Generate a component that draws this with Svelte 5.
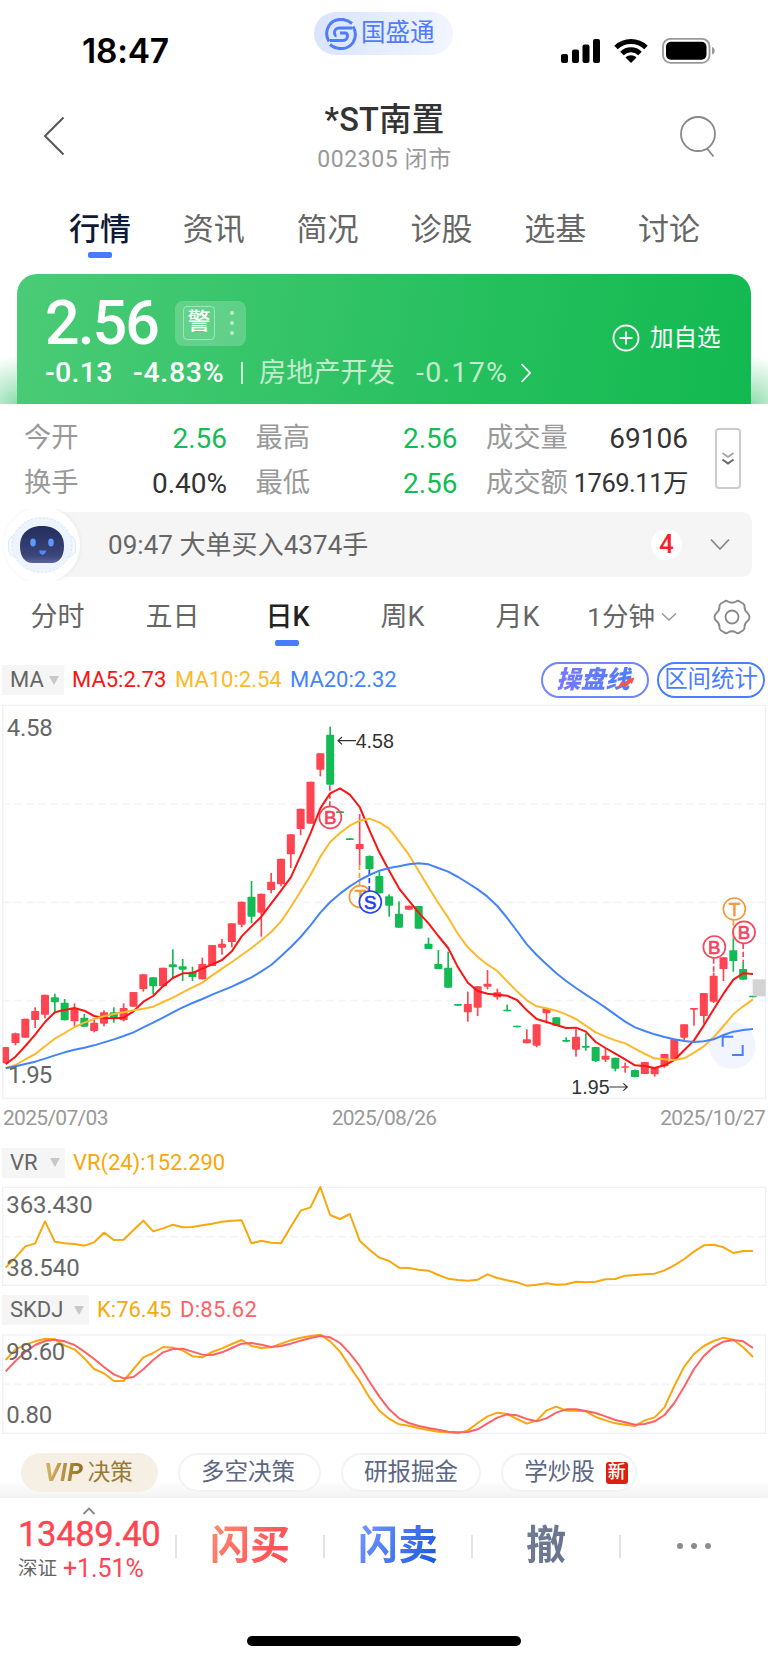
<script lang="ts">
  const tabs = ['行情', '资讯', '简况', '诊股', '选基', '讨论'];
  const periods = ['分时', '五日', '日K', '周K', '月K'];
  let activeTab = '行情';
  let activePeriod = '日K';

  const quotes = [
    { label: '今开', value: '2.56', down: true },
    { label: '最高', value: '2.56', down: true },
    { label: '成交量', value: '69106' },
    { label: '换手', value: '0.40%' },
    { label: '最低', value: '2.56', down: true },
    { label: '成交额', value: '1769.11万', small: true }
  ];

  // body top, body bottom, high, low, colour
  type Candle = [number, number, number, number, 'r' | 'g'];
  const candles: Candle[] = [
    [1041, 1090, 1041, 1090, 'r'], [1000, 1029, 998, 1036, 'r'], [956, 1013, 956, 1013, 'r'],
    [933, 960, 922, 984, 'r'], [884, 944, 884, 955, 'r'], [892, 907, 881, 940, 'g'],
    [908, 961, 897, 961, 'g'], [925, 964, 910, 980, 'r'], [953, 980, 942, 980, 'g'],
    [968, 993, 960, 997, 'r'], [937, 971, 931, 979, 'r'], [937, 957, 922, 968, 'g'],
    [924, 961, 910, 964, 'r'], [876, 920, 876, 920, 'r'], [823, 867, 823, 875, 'r'],
    [832, 859, 832, 883, 'g'], [803, 859, 803, 859, 'r'], [793, 802, 748, 834, 'g'],
    [799, 809, 777, 843, 'g'], [815, 831, 800, 843, 'g'], [792, 838, 773, 838, 'r'],
    [735, 798, 735, 798, 'r'], [731, 743, 717, 764, 'r'], [670, 726, 670, 742, 'r'],
    [605, 674, 605, 682, 'r'], [590, 650, 543, 670, 'g'], [581, 638, 581, 710, 'r'],
    [545, 570, 519, 580, 'r'], [476, 553, 476, 559, 'r'], [403, 463, 403, 504, 'r'],
    [326, 387, 326, 406, 'r'], [245, 371, 245, 371, 'r'], [160, 209, 160, 229, 'r'],
    [104, 254, 80, 254, 'g'], [334, 339, 334, 339, 'g'], [415, 420, 415, 420, 'g'],
    [432, 447, 342, 495, 'r'], [468, 508, 466, 510, 'g'], [528, 580, 515, 580, 'g'],
    [589, 617, 583, 650, 'g'], [641, 683, 604, 683, 'g'], [617, 629, 617, 629, 'r'],
    [618, 686, 618, 686, 'g'], [731, 747, 713, 747, 'g'], [792, 807, 750, 807, 'g'],
    [803, 863, 755, 863, 'g'], [912, 917, 912, 917, 'g'], [912, 937, 875, 965, 'r'],
    [859, 923, 859, 948, 'r'], [851, 860, 810, 868, 'r'], [877, 892, 866, 899, 'r'],
    [929, 934, 914, 934, 'g'], [977, 982, 977, 982, 'g'], [1018, 1030, 988, 1030, 'r'],
    [973, 1037, 973, 1042, 'r'], [924, 940, 924, 970, 'r'], [952, 977, 952, 977, 'g'],
    [1020, 1025, 1012, 1025, 'g'], [1010, 1049, 985, 1070, 'r'], [1038, 1043, 1000, 1052, 'g'],
    [1041, 1083, 1041, 1086, 'g'], [1067, 1079, 1046, 1086, 'r'], [1073, 1106, 1073, 1114, 'g'],
    [1099, 1103, 1088, 1118, 'r'], [1110, 1131, 1108, 1132, 'g'], [1086, 1122, 1086, 1122, 'r'],
    [1103, 1123, 1103, 1130, 'r'], [1062, 1099, 1062, 1103, 'r'], [1017, 1077, 1017, 1077, 'r'],
    [973, 1013, 973, 1024, 'r'], [924, 929, 924, 977, 'r'], [879, 948, 879, 971, 'r'],
    [827, 905, 818, 909, 'r'], [772, 807, 772, 843, 'r'], [751, 783, 715, 815, 'g'],
    [807, 839, 785, 839, 'g'], [887, 892, 887, 892, 'g']
  ];

  const ma5 = [
    1093, 1070, 1038, 1004, 966, 937, 930, 924, 932, 948, 954, 955, 953, 934, 905, 888, 859, 834, 820, 819,
    806, 793, 780, 754, 709, 679, 650, 611, 572, 532, 467, 400, 325, 280, 265, 284, 321, 391, 457, 512,
    565, 602, 638, 670, 708, 744, 802, 848, 873, 881, 884, 887, 900, 931, 957, 966, 975, 984, 983, 995,
    1026, 1044, 1061, 1078, 1096, 1098, 1104, 1096, 1080, 1051, 1021, 976, 928, 881, 839, 820, 822
  ];
  const ma10 = [
    1104, 1095, 1078, 1062, 1039, 1016, 999, 981, 968, 957, 949, 942, 937, 931, 926, 920, 906, 893, 877, 862,
    848, 826, 806, 786, 765, 744, 721, 696, 664, 621, 574, 525, 470, 426, 399, 377, 362, 356, 367, 386,
    424, 464, 513, 562, 609, 653, 702, 742, 770, 794, 813, 844, 874, 901, 919, 925, 932, 943, 957, 977,
    997, 1010, 1021, 1030, 1046, 1062, 1075, 1078, 1080, 1075, 1058, 1039, 1012, 978, 943, 919, 898
  ];
  const ma20 = [
    1105, 1099, 1092, 1085, 1076, 1066, 1057, 1049, 1043, 1036, 1027, 1018, 1008, 997, 982, 968, 953, 937, 922, 909,
    897, 884, 872, 860, 846, 832, 814, 795, 769, 741, 711, 676, 638, 606, 581, 559, 540, 525, 512, 504,
    499, 493, 490, 493, 504, 515, 531, 549, 568, 590, 618, 654, 693, 733, 765, 793, 820, 843, 864, 884,
    903, 923, 944, 965, 982, 993, 1003, 1011, 1018, 1023, 1026, 1024, 1018, 1005, 995, 990, 987
  ];
  const vr = [
    518, 488, 454, 445, 379, 440, 445, 447, 452, 442, 413, 435, 434, 405, 377, 409, 400, 389, 397, 396,
    391, 386, 380, 377, 376, 445, 437, 443, 445, 395, 347, 337, 276, 360, 372, 357, 437, 464, 488, 498,
    518, 519, 524, 527, 540, 551, 555, 557, 554, 538, 549, 556, 562, 572, 569, 565, 569, 568, 560, 562,
    560, 553, 552, 542, 540, 538, 536, 526, 511, 492, 470, 451, 449, 457, 474, 468, 468
  ];
  const skdjK = [
    795, 763, 749, 739, 731, 733, 752, 763, 790, 822, 835, 858, 858, 822, 787, 774, 756, 758, 766, 784,
    787, 771, 760, 747, 735, 753, 759, 757, 746, 736, 728, 723, 719, 739, 770, 815, 858, 908, 947, 971,
    988, 992, 1000, 1005, 1010, 1012, 1015, 1006, 984, 964, 953, 957, 972, 986, 977, 946, 935, 947, 947, 949,
    966, 976, 985, 989, 993, 976, 967, 937, 873, 815, 777, 753, 738, 728, 734, 757, 786
  ];
  const skdjD = [
    829, 798, 771, 750, 738, 734, 739, 750, 770, 792, 816, 838, 850, 846, 823, 795, 772, 762, 761, 770,
    779, 780, 772, 759, 746, 744, 749, 756, 753, 746, 737, 729, 723, 727, 744, 775, 813, 860, 905, 943,
    970, 984, 993, 999, 1004, 1010, 1012, 1011, 1003, 985, 968, 958, 961, 972, 979, 970, 953, 943, 943, 948,
    954, 964, 975, 982, 989, 987, 979, 960, 924, 875, 822, 783, 756, 740, 735, 739, 759
  ];

  const marks = [
    { t: 'B', x: 991, y: 352, sx: 989.5, y1: 256, y2: 319, color: '#f5455a', fill: 'none' },
    { t: 'T', x: 1081, y: 590, sx: 1078.5, y1: 494, y2: 557, color: '#f29b38', fill: 'none' },
    { t: 'S', x: 1111, y: 606, sx: 1108, y1: 510, y2: 573, color: '#2440f5', fill: '#fff' },
    { t: 'B', x: 2143, y: 741, sx: 2141, y1: 775, y2: 824, color: '#f5455a', fill: 'none' },
    { t: 'T', x: 2203, y: 627, sx: 2200, y1: 661, y2: 715, color: '#f29b38', fill: 'none' },
    { t: 'B', x: 2232, y: 697, sx: 2229.5, y1: 731, y2: 785, color: '#f5455a', fill: 'none' }
  ];

  const cx = (i: number) => 17 + i * 29.5;
  const line = (ys: number[]) => ys.map((y, i) => `${cx(i)},${y}`).join(' ');
</script>

<main>
  <header class="status">
    <span class="time">18:47</span>
    <div class="brand">
      <svg width="32" height="32" viewBox="0 0 32 32" fill="none" stroke="#4d7cff">
        <path d="M27 5.500C20-.5 9 0 4 7.500 1 12.500 1 18.500 4 23.500" stroke-width="3" />
        <path d="M5 26.500C12 32.500 23 32 28 24.500c3-5 3-11 0-16" stroke-width="3" />
        <path d="M27 10H14a4.500 4.500 0 0 0-4.500 4.500c0 2 1 3.500 2 3.500" stroke-width="3" />
        <path d="M5 22.500h13a4.500 4.500 0 0 0 4.500-4.500c0-2-1-3-2.500-3h-5" stroke-width="3" />
      </svg>
      <span>国盛通</span>
    </div>
    <div class="signals">
      <svg width="160" height="30" viewBox="0 0 160 30">
        <rect x="1" y="18" width="7" height="9" rx="2" />
        <rect x="12" y="13.500" width="7" height="13.500" rx="2" />
        <rect x="22.500" y="8.500" width="7" height="18.500" rx="2" />
        <rect x="33" y="3" width="7" height="24" rx="2" />
        <g fill="none" stroke="#000" stroke-width="5">
          <path d="M56 11.500c8.500-8 21.500-8 30 0" />
          <path d="M62 17.500c5-5 13-5 18 0" />
        </g>
        <path d="M65.500 21.500c3-3 8-3 11 0L71 27z" />
        <rect x="103" y="2.800" width="46.500" height="24" rx="7.500" fill="none" stroke="#999" stroke-width="1.800" />
        <rect x="106" y="5.800" width="40.500" height="18" rx="5" />
        <path d="M152 11c3.600 1.200 3.600 6.400 0 7.600z" fill="#999" />
      </svg>
    </div>
  </header>

  <nav class="title-bar">
    <svg width="24" height="40" viewBox="0 0 24 40" fill="none" stroke="#555" stroke-width="2">
      <path d="M20.500 1.500 2 20l18.500 18.500" />
    </svg>
    <div class="title">
      <h1>*ST南置</h1>
      <p>002305 闭市</p>
    </div>
    <svg width="40" height="44" viewBox="0 0 40 44" fill="none" stroke="#888" stroke-width="1.800">
      <circle cx="20" cy="19" r="17" />
      <path d="m29 33.500 6.500 8" />
    </svg>
  </nav>

  <div class="tabs">
    {#each tabs as tab}
      <button class:active={tab === activeTab} on:click={() => (activeTab = tab)}>{tab}</button>
    {/each}
  </div>

  <div class="card-wrap">
    <section class="card">
      <div class="price-row">
        <strong class="price">2.56</strong>
        <div class="warn"><span>警</span><i></i></div>
      </div>
      <div class="change-row">
        <span class="chg">-0.13</span>
        <span class="pct">-4.83%</span>
        <span class="bar"></span>
        <span class="sector">房地产开发</span>
        <span class="sector-pct">-0.17%</span>
        <svg width="12" height="22" viewBox="0 0 12 22" fill="none" stroke="#fff" stroke-width="1.800">
          <path d="m1.500 2 8.500 9-8.500 9" />
        </svg>
      </div>
      <button class="add">
        <svg width="28" height="28" viewBox="0 0 28 28" fill="none" stroke="#fff" stroke-width="1.800">
          <circle cx="14" cy="14" r="12.500" />
          <path d="M14 7.500v13M7.500 14h13" />
        </svg>
        <span>加自选</span>
      </button>
    </section>
  </div>

  <section class="stats">
    <div class="quotes">
      {#each quotes as q}
        <div class="quote">
          <span>{q.label}</span>
          <b class:down={q.down} class:small={q.small}>{q.value}</b>
        </div>
      {/each}
    </div>
    <button class="expand" aria-label="more">
      <svg width="14" height="14" viewBox="0 0 14 14" fill="none" stroke-width="2">
        <path d="m1.500 1 5.500 4 5.500-4" stroke="#aaa" />
        <path d="m1.500 7.500 5.500 4 5.500-4" stroke="#666" />
      </svg>
    </button>
  </section>

  <section class="notice">
    <svg class="robot" width="86" height="72" viewBox="0 0 86 72">
      <defs>
        <radialGradient id="halo">
          <stop offset="0.85" stop-color="#dedee2" stop-opacity="0.6" />
          <stop offset="1" stop-color="#f5f5f5" stop-opacity="0" />
        </radialGradient>
        <linearGradient id="face" x1="0" y1="0" x2="0" y2="1">
          <stop offset="0" stop-color="#232d5c" />
          <stop offset="0.8" stop-color="#3b4578" />
          <stop offset="1" stop-color="#5a64a0" />
        </linearGradient>
      </defs>
      <rect width="36" height="72" fill="#fff" />
      <circle cx="43" cy="36" r="42" fill="url(#halo)" />
      <circle cx="42" cy="36" r="38" fill="#fff" />
      <rect x="8.500" y="26" width="67" height="22" rx="8" fill="#f6f9ff" stroke="#dce8fc" />
      <ellipse cx="42" cy="36" rx="30" ry="27.500" fill="#edf4ff" stroke="#d5e5fd" stroke-dasharray="2 2" />
      <path d="M20 37c0-13 9-20 22-20s22 7 22 20c0 12-6 17-12 17H32c-6 0-12-5-12-17z" fill="url(#face)" />
      <ellipse cx="33" cy="33.500" rx="2.800" ry="4" fill="#5b9bff" />
      <ellipse cx="51" cy="33.500" rx="2.800" ry="4" fill="#5b9bff" />
      <path d="M39 41.500h7.500l-1.500 3-2.500 1.500-2.500-1.500z" fill="#4b8bf5" />
    </svg>
    <p>09:47 大单买入4374手</p>
    <span class="count">4</span>
    <svg width="20" height="13" viewBox="0 0 20 13" fill="none" stroke="#888" stroke-width="1.800">
      <path d="m1 1.500 9 9.500 9-9.500" />
    </svg>
  </section>

  <div class="periods">
    {#each periods as p}
      <button class:active={p === activePeriod} on:click={() => (activePeriod = p)}>{p}</button>
    {/each}
    <button class="minute">
      1分钟
      <svg width="16" height="10" viewBox="0 0 16 10" fill="none" stroke="#999" stroke-width="1.500">
        <path d="m1 1.500 7 6.500 7-6.500" />
      </svg>
    </button>
    <svg class="gear" width="38" height="38" viewBox="0 0 38 38" fill="none" stroke="#8a8a8a" stroke-width="1.900">
      <path d="M11.500 3.500Q13 2 15 3.500q4 2.500 8 0Q25 2 26.500 3.500l3.500 2q2 1.500 1.500 3.500 0 3.500 3 6 2 1.500 2 4t-2 4q-3 2.500-3 6 .5 2-1.500 3.500l-3.500 2Q25 36 23 34.500q-4-2.500-8 0Q13 36 11.500 34.500l-3.500-2q-2-1.500-1.500-3.500 0-3.500-3-6-2-1.500-2-4t2-4q3-2.500 3-6Q6 7 8 5.500z" />
      <circle cx="19" cy="19" r="6.500" />
    </svg>
  </div>

  <div class="indicator ma">
    <span class="chip">MA<i></i></span>
    <span class="m5">MA5:2.73</span>
    <span class="m10">MA10:2.54</span>
    <span class="m20">MA20:2.32</span>
    <button class="outline trade">
      <em>操盘线</em>
      <svg width="18" height="12" viewBox="0 0 18 12" fill="#ff5340">
        <path d="M0 11.500 4.500 4.500 8 6l3-3-2-.5L17.500.5 15 7l-1.500-1.500-4.500 4.500-3-1.500z" />
      </svg>
    </button>
    <button class="outline">区间统计</button>
  </div>

  <svg class="chart" width="768" height="400" viewBox="0 0 2304 1200">
    <rect class="frame" x="8" y="16" width="2289" height="1179" />
    {#each [312, 607, 902] as y}
      <line class="grid" x1="8" x2="2297" y1={y} y2={y} />
    {/each}
    <text class="scale" x="20" y="109" textLength="138">4.58</text>
    {#each candles as [top, bottom, high, low, c], i}
      <g class={c}>
        <rect x={cx(i) - 2.5} y={high} width="5" height={low - high} />
        <rect x={i ? cx(i) - 12 : 8} y={top} width={i ? 24 : 19} height={bottom - top} rx="2.5" />
      </g>
    {/each}
    {#each marks as m}
      <line x1={m.sx} x2={m.sx} y1={m.y1} y2={m.y2} stroke={m.color} stroke-width="5" stroke-dasharray="16 8" />
      <circle cx={m.x} cy={m.y} r="33" fill={m.fill} stroke={m.color} stroke-width="5" />
      <text class="mark" x={m.x} y={m.y + 20} fill={m.color} stroke={m.color}>{m.t}</text>
    {/each}
    <circle cx="2197" cy="1037" r="70" fill="#f1f5fe" />
    <polyline class="ma-line" points={line(ma5)} stroke="#fa1414" />
    <polyline class="ma-line" points={line(ma10)} stroke="#fdb92c" />
    <polyline class="ma-line" points={line(ma20)} stroke="#4484fb" />
    <path d="M2168 1040v-30h32M2228 1035v30h-32" fill="none" stroke="#4a7dff" stroke-width="6" />
    <rect x="2258" y="838" width="39" height="51" fill="#d3d3d3" />
    <text class="scale" x="24" y="1148" textLength="133">1.95</text>
    <path class="arrow" d="M1068 122h-54m12-11-12 11 12 11" />
    <text class="peak" x="1067" y="143">4.58</text>
    <text class="peak" x="1714" y="1182">1.95</text>
    <path class="arrow" d="M1828 1161h54m-12-11 12 11-12 11" />
  </svg>
  <div class="dates">
    <span>2025/07/03</span>
    <span>2025/08/26</span>
    <span>2025/10/27</span>
  </div>

  <div class="indicator">
    <span class="chip vr-chip">VR<i></i></span>
    <span class="vr-value">VR(24):152.290</span>
  </div>
  <svg class="chart" width="768" height="102" viewBox="0 270 2304 306">
    <rect class="frame" x="8" y="277" width="2289" height="294" />
    <line class="grid" x1="8" x2="2297" y1="425" y2="425" />
    <polyline class="ma-line" points={line(vr)} stroke="#f8a70c" />
    <text class="scale" x="19" y="353" textLength="259">363.430</text>
    <text class="scale" x="19" y="542" textLength="220">38.540</text>
  </svg>

  <div class="indicator skdj">
    <span class="chip skdj-chip">SKDJ<i></i></span>
    <span class="k-value">K:76.45</span>
    <span class="d-value">D:85.62</span>
  </div>
  <svg class="chart" width="768" height="102" viewBox="0 714 2304 306">
    <rect class="frame" x="8" y="720" width="2289" height="295" />
    <line class="grid" x1="8" x2="2297" y1="868" y2="868" />
    <polyline class="ma-line" points={line(skdjK)} stroke="#f8a70c" />
    <polyline class="ma-line" points={line(skdjD)} stroke="#ff6166" />
    <text class="scale" x="19" y="796" textLength="177">98.60</text>
    <text class="scale" x="19" y="984" textLength="138">0.80</text>
  </svg>

  <div class="pills">
    <button class="vip"><em>VIP</em>决策</button>
    <button class="wide">多空决策</button>
    <button>研报掘金</button>
    <button class="learn">学炒股<sup>新</sup></button>
  </div>

  <footer>
    <div class="trade-bar">
      <div class="index">
        <svg width="14" height="8" viewBox="0 0 14 8" fill="none" stroke="#888" stroke-width="1.800">
          <path d="m1.500 7 5.500-5.500L12.500 7" />
        </svg>
        <strong>13489.40</strong>
        <p>深证 <b>+1.51%</b></p>
      </div>
      <button class="buy"><span>闪买</span></button>
      <button class="sell"><span>闪卖</span></button>
      <button class="cancel"><span>撤</span></button>
      <button class="more" aria-label="menu"><i></i><i></i><i></i></button>
    </div>
    <div class="home"></div>
  </footer>
</main>

<style>
  :global(body) {
    margin: 0;
    background: #fff;
  }

  main {
    width: 768px;
    height: 1663px;
    overflow: hidden;
    background: #fff;
    color: #666;
    font-family: Roboto, 'Noto Sans CJK SC', sans-serif;
  }

  main * {
    box-sizing: border-box;
  }

  button {
    padding: 0;
    border: none;
    background: none;
    color: inherit;
    font: inherit;
    white-space: nowrap;
  }

  h1,
  p {
    margin: 0;
  }

  svg {
    display: block;
    flex: none;
  }

  .status {
    display: grid;
    grid-template-columns: 314px 139px 1fr;
    height: 88px;
    padding-top: 12px;
  }

  .time {
    padding: 19px 0 0 82px;
    color: #000;
    font: 600 33.5px/40px Inter, sans-serif;
    letter-spacing: -0.2px;
  }

  .brand {
    display: flex;
    align-items: center;
    gap: 4px;
    height: 43px;
    padding-left: 11px;
    border-radius: 22px;
    background: linear-gradient(100deg, #d9e3fd, #f3f6ff);
    color: #4d7cff;
    font-size: 24.5px;
    line-height: 40px;
  }

  .brand span {
    padding-bottom: 1px;
  }

  .signals {
    padding: 24px 0 0 107px;
  }

  .title-bar {
    display: grid;
    grid-template-columns: 24px 1fr 40px;
    align-items: start;
    height: 108px;
    padding: 10px 50px 0 43px;
  }

  .title-bar > svg:first-child {
    margin-top: 18px;
  }

  .title-bar > svg:last-child {
    margin-top: 17px;
  }

  .title {
    padding-left: 24px;
    text-align: center;
  }

  h1 {
    color: #333;
    font-size: 32.5px;
    font-weight: 500;
    line-height: 44px;
    letter-spacing: 0.2px;
  }

  .title p {
    color: #999;
    font-size: 23px;
    line-height: 35px;
    letter-spacing: 0.6px;
  }

  .tabs {
    display: flex;
    height: 78px;
    padding: 11px 42px 0 43px;
  }

  .tabs button {
    flex: 1;
    display: flex;
    flex-direction: column;
    align-items: center;
    color: #666;
    font-size: 31px;
    line-height: 45px;
  }

  .tabs .active {
    color: #0f1935;
    font-weight: 500;
  }

  .active::after {
    content: '';
    width: 24px;
    height: 6px;
    border-radius: 2px;
    background: #4a7bff;
  }

  .card-wrap {
    height: 130px;
    padding: 0 17px;
    background: radial-gradient(circle at 17px 130px, rgba(30, 188, 92, 0.5), transparent 48px),
      radial-gradient(circle at 751px 130px, rgba(30, 188, 92, 0.5), transparent 48px);
  }

  .card {
    display: grid;
    grid-template: 72px 1fr / 566px 1fr;
    height: 130px;
    padding-left: 28px;
    border-radius: 20px 20px 0 0;
    background: linear-gradient(100deg, #4bcb77, #24bf5d 65%, #12b950);
    color: #fff;
  }

  .price-row {
    display: flex;
    align-items: center;
    height: 72px;
    padding-top: 26px;
  }

  .price {
    width: 130px;
    padding-bottom: 1px;
    font-size: 61px;
    font-weight: 500;
    line-height: 60px;
    letter-spacing: -2px;
  }

  .warn {
    display: flex;
    align-items: center;
    width: 71px;
    height: 45px;
    padding-left: 8px;
    border-radius: 8px;
    background: rgba(255, 255, 255, 0.2);
  }

  .warn span {
    width: 32px;
    height: 34px;
    border: 1px solid rgba(255, 255, 255, 0.4);
    border-radius: 4px;
    font-size: 23px;
    font-weight: 500;
    line-height: 30px;
    text-align: center;
  }

  .warn i {
    width: 4px;
    height: 4px;
    margin-left: 15px;
    border-radius: 50%;
    background: #c0eccd;
    box-shadow: 0 -10px #c0eccd, 0 10px #c0eccd;
  }

  .change-row {
    display: flex;
    align-items: center;
    padding-top: 2px;
    font-size: 28.5px;
    line-height: 40px;
    white-space: nowrap;
    height: 52px;
  }

  .chg {
    width: 88px;
    font-weight: 500;
    letter-spacing: 0.3px;
  }

  .pct {
    width: 108px;
    font-weight: 500;
    letter-spacing: 0.7px;
  }

  .bar {
    width: 2px;
    height: 22px;
    margin-right: 16px;
    background: #d0f0da;
  }

  .sector {
    width: 157px;
    color: #c0eccd;
    font-size: 27.2px;
  }

  .sector-pct {
    width: 104px;
    color: #c0eccd;
    letter-spacing: 1.3px;
  }

  .add {
    display: flex;
    grid-area: 1 / 2 / 3 / 3;
    align-items: center;
    gap: 10px;
    height: 130px;
    font-size: 23.5px;
    padding: 0 0 3px 1px;
  }

  .add span {
    padding-bottom: 3px;
  }

  .stats {
    display: flex;
    height: 108px;
    padding: 12px 0 0 24px;
  }

  .quotes {
    display: grid;
    grid-template: 45px 45px / 203px 202px 202px;
    column-gap: 28.5px;
    width: 664px;
  }

  .quote {
    display: flex;
    align-items: center;
    justify-content: space-between;
    color: #999;
    font-size: 27.3px;
    line-height: 45px;
    white-space: nowrap;
  }

  .quote b {
    color: #333;
    font-size: 28px;
    font-weight: 400;
  }

  .quote .down {
    color: #15bb55;
  }

  .quote .small {
    font-size: 25.5px;
    letter-spacing: -0.5px;
  }

  .expand {
    display: flex;
    align-items: center;
    justify-content: center;
    width: 26px;
    height: 61px;
    margin: 12px 0 0 27px;
    border: 2px solid #ccc;
    border-radius: 4px;
  }

  .notice {
    display: flex;
    align-items: center;
    width: 752px;
    height: 65px;
    border-radius: 0 10px 10px 0;
    background: #f5f5f5;
  }

  .robot {
    margin: -4px 0;
  }

  .notice p {
    flex: 1;
    padding: 0 0 5px 22px;
    font-size: 26px;
    letter-spacing: 0.05px;
  }

  .count {
    width: 31px;
    height: 31px;
    margin-right: 28px;
    border-radius: 50%;
    background: #fff;
    color: #fa1e2c;
    font-size: 26px;
    font-weight: 500;
    line-height: 31px;
    text-align: center;
  }

  .notice > svg:last-child {
    margin-right: 22px;
  }

  .periods {
    display: flex;
    align-items: flex-start;
    height: 78px;
    padding-top: 20px;
    font-size: 27px;
    line-height: 40px;
  }

  .periods button {
    display: flex;
    flex-direction: column;
    align-items: center;
    width: 115px;
  }

  .periods .active {
    color: #222;
    font-weight: 500;
  }

  .periods .active::after {
    margin: 3px 2px 0 0;
  }

  .periods .minute {
    flex-direction: row;
    gap: 6px;
    width: 124px;
    margin-left: 12px;
    font-size: 26.5px;
  }

  .gear {
    margin: 1px 0 0 2px;
  }

  .indicator {
    display: flex;
    align-items: center;
    height: 45px;
    padding-left: 2px;
    font-size: 22px;
    line-height: 30px;
  }

  .ma {
    padding-top: 5px;
  }

  .chip {
    display: flex;
    align-items: center;
    justify-content: space-between;
    width: 62px;
    height: 30px;
    margin-right: 8px;
    padding: 0 5px 0 8px;
    background: #f5f5f5;
  }

  .chip i {
    border: 5.5px solid transparent;
    border-top: 9px solid #c8c8c8;
    border-bottom: 0;
  }

  .m5 {
    width: 103px;
    color: #fa1414;
  }

  .m10 {
    width: 115px;
    color: #fdb92c;
  }

  .m20 {
    width: 251px;
    color: #4484fb;
  }

  .outline {
    display: flex;
    align-items: center;
    justify-content: center;
    width: 108px;
    height: 36px;
    border: 2px solid #4a7dff;
    border-radius: 18px;
    color: #4a7dff;
    font-size: 23.4px;
    line-height: 30px;
    padding-bottom: 2px;
  }

  .trade {
    position: relative;
    margin-right: 8px;
    border-color: #6f86ff;
  }

  .trade em {
    background: linear-gradient(90deg, #7a78ff, #4a7dff);
    background-clip: text;
    color: transparent;
    font-size: 24.5px;
    font-weight: 900;
    line-height: 32px;
    padding: 2px 6px 0 2px;
  }

  .trade svg {
    position: absolute;
    right: 12px;
    bottom: 7px;
  }

  .chart {
    width: 768px;
  }

  .frame {
    fill: none;
    stroke: #eff1f8;
    stroke-width: 4;
  }

  .grid {
    stroke: #f3f4f9;
    stroke-width: 5;
    stroke-dasharray: 22 14;
  }

  .scale {
    fill: #666;
    font-size: 72px;
  }

  .r {
    fill: #ff4551;
  }

  .g {
    fill: #14ba54;
  }

  .mark {
    font: 56px 'Liberation Sans', sans-serif;
    stroke-width: 2;
    text-anchor: middle;
  }

  .ma-line {
    fill: none;
    stroke-width: 6;
    stroke-linejoin: round;
  }

  .arrow {
    fill: none;
    stroke: #333;
    stroke-width: 3.5;
  }

  .peak {
    fill: #333;
    font: 59px 'Liberation Sans', sans-serif;
  }

  .dates {
    display: flex;
    justify-content: space-between;
    height: 40px;
    padding: 2px 3px 0;
    color: #999;
    font-size: 21px;
    line-height: 32px;
    letter-spacing: -0.7px;
  }

  .vr-chip {
    width: 63px;
    margin-right: 8px;
  }

  .vr-value,
  .k-value {
    color: #f8a70c;
  }

  .vr-value {
    letter-spacing: -0.05px;
  }

  .skdj {
    height: 46px;
  }

  .skdj-chip {
    width: 87px;
    margin-right: 8px;
  }

  .k-value {
    width: 83px;
  }

  .d-value {
    color: #ff6166;
    letter-spacing: 0.3px;
  }

  .pills {
    display: flex;
    height: 63px;
    padding: 18px 0 0 21px;
    background: linear-gradient(#fff 45px, #f3f3f3);
  }

  .pills button {
    display: flex;
    align-items: center;
    justify-content: center;
    width: 140px;
    height: 39px;
    margin-right: 20px;
    border: 2px solid #f3f3f5;
    border-radius: 20px;
    background: #fff;
    color: #5c6784;
    font-size: 23.500px;
    line-height: 35px;
  }

  .pills .wide {
    width: 143px;
    padding-right: 3px;
  }

  .pills .vip {
    width: 137px;
    border: none;
    background: #f5f0e3;
    color: #997a32;
    font-size: 22.5px;
    padding-right: 2px;
  }

  .vip em {
    margin-right: 3px;
    padding-right: 2px;
    background: linear-gradient(90deg, #dcb56a, #8f6a1c);
    background-clip: text;
    color: transparent;
    font-size: 25px;
    font-weight: 700;
  }

  .pills .learn {
    width: 136px;
    gap: 11px;
    padding-left: 14px;
  }

  sup {
    width: 22px;
    height: 22px;
    border-radius: 3px;
    background: #df1f0d;
    color: #fff;
    font-size: 18px;
    font-weight: 500;
    line-height: 20px;
    text-align: center;
  }

  footer {
    display: flex;
    flex-direction: column;
    align-items: center;
    justify-content: space-between;
    height: 165px;
    padding-bottom: 17px;
    background: #fff;
  }

  .trade-bar {
    display: grid;
    grid-template-columns: 175px repeat(4, 148px);
    width: 100%;
    height: 96px;
  }

  .index {
    display: flex;
    flex-direction: column;
    padding: 9px 0 0 18px;
  }

  .index svg {
    margin-left: 64px;
  }

  .index strong {
    color: #ff4551;
    font-size: 34.5px;
    font-weight: 400;
    line-height: 38px;
    letter-spacing: -0.3px;
    -webkit-text-stroke: 0.4px;
  }

  .index p {
    display: flex;
    align-items: center;
    gap: 6px;
    padding-top: 2px;
    font-size: 19.5px;
    line-height: 28px;
  }

  .index b {
    color: #ff4551;
    font-size: 25px;
    font-weight: 400;
    letter-spacing: -0.1px;
  }

  .trade-bar button {
    display: flex;
    align-items: center;
    justify-content: center;
    font-size: 40px;
    font-weight: 600;
    line-height: 60px;
  }

  .trade-bar button::before {
    content: '';
    width: 2px;
    height: 23px;
    background: #e3e3e5;
  }

  .trade-bar button span {
    flex: 1;
    background-clip: text;
    color: transparent;
  }

  .buy span {
    background-image: linear-gradient(120deg, #ff866f 25%, #ff4150 80%);
  }

  .sell span {
    background-image: linear-gradient(120deg, #7094ff 25%, #1356d8 80%);
  }

  .cancel span {
    background-image: linear-gradient(100deg, #7c86a0, #5d6883);
  }

  .more i {
    width: 6px;
    height: 6px;
    margin-left: 8px;
    border-radius: 50%;
    background: #8c8c8c;
  }

  .trade-bar .more::before {
    margin-right: 48px;
  }

  .trade-bar .more {
    justify-content: flex-start;
  }

  .home {
    width: 274px;
    height: 10px;
    border-radius: 5px;
    background: #000;
  }
</style>
